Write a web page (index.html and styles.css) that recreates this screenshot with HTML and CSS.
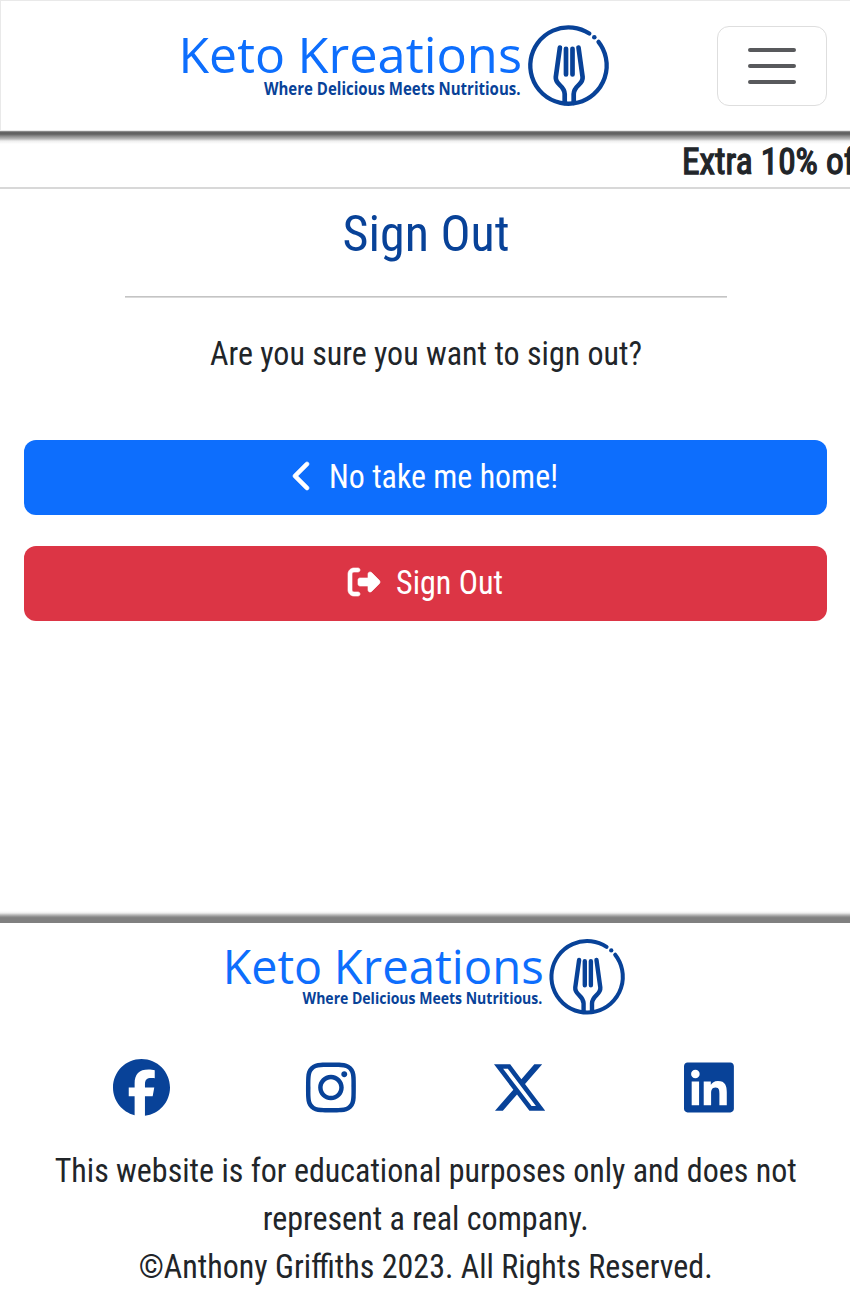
FILE: index.html
```html
<!DOCTYPE html>
<html lang="en">
<head>
<meta charset="utf-8">
<title>Keto Kreations - Sign Out</title>
<link rel="stylesheet" href="styles.css">
</head>
<body>
<svg class="defs" width="0" height="0">
  <symbol id="logo" viewBox="0 0 430 84">
    <g class="brand-name">
      <text x="-1.5" y="49" textLength="106.5" lengthAdjust="spacingAndGlyphs">Keto</text>
      <text x="117.5" y="49" textLength="224.5" lengthAdjust="spacingAndGlyphs">Kreations</text>
    </g>
    <text class="brand-tag" x="84" y="71" textLength="256.5" lengthAdjust="spacingAndGlyphs">Where Delicious Meets Nutritious.</text>
    <g class="brand-mark">
      <path d="M409.3 9.5A38.2 38.2 0 1 0 418.5 17.9"/>
      <path class="fork" d="M379.9 23.5L375.8 53C375 61 384.5 61 384.7 70V79M398.5 23.5L402.6 53C403.4 61 393.9 61 393.7 70V79"/>
      <path class="fork" d="M386 24.8V50.5M392.5 24.8V50.5"/>
      <circle cx="414.3" cy="13.3" r="2.3"/>
    </g>
  </symbol>
</svg>
<header class="navbar">
  <svg class="logo"><use href="#logo"/></svg>
  <button class="toggler" aria-label="Menu">
    <svg width="60" height="60" viewBox="0 0 30 30"><path d="M4 7h22M4 15h22M4 23h22"/></svg>
  </button>
</header>
<div class="banner">
  <svg class="banner-line" width="168" height="50"><text x="0" y="36.5" textLength="173" lengthAdjust="spacingAndGlyphs">Extra 10% of</text></svg>
</div>
<main class="content">
  <svg class="title" width="168" height="60"><text x="0.5" y="42" textLength="167" lengthAdjust="spacingAndGlyphs">Sign Out</text></svg>
  <hr class="rule">
  <svg class="line" width="432" height="48"><text x="0" y="34.7" textLength="432" lengthAdjust="spacingAndGlyphs">Are you sure you want to sign out?</text></svg>
  <div class="actions">
    <a class="btn btn-home">
      <svg class="chevron" viewBox="0 0 320 512"><path d="M9.4 233.4c-12.5 12.5-12.5 32.8 0 45.3l192 192c12.5 12.5 32.8 12.5 45.3 0s12.5-32.8 0-45.3L77.3 256 246.6 86.6c12.5-12.5 12.5-32.8 0-45.3s-32.8-12.5-45.3 0l-192 192z"/></svg>
      <svg class="line" width="230" height="48"><text x="0" y="34.7" textLength="229" lengthAdjust="spacingAndGlyphs">No take me home!</text></svg>
    </a>
    <a class="btn btn-out">
      <svg class="exit" viewBox="0 0 512 512"><path d="M377.9 105.9L500.7 228.7c7.2 7.2 11.3 17.1 11.3 27.3s-4.1 20.1-11.3 27.3L377.9 406.1c-6.4 6.4-15 9.9-24 9.9c-18.7 0-33.9-15.2-33.9-33.9l0-62.1-128 0c-17.7 0-32-14.3-32-32l0-64c0-17.7 14.3-32 32-32l128 0 0-62.1c0-18.7 15.2-33.9 33.9-33.9c9 0 17.6 3.6 24 9.9zM160 96L96 96c-17.7 0-32 14.3-32 32l0 256c0 17.7 14.3 32 32 32l64 0c17.7 0 32 14.3 32 32s-14.3 32-32 32l-64 0c-53 0-96-43-96-96L0 128C0 75 43 32 96 32l64 0c17.7 0 32 14.3 32 32s-14.3 32-32 32z"/></svg>
      <svg class="line" width="107" height="48"><text x="0" y="34.7" textLength="107" lengthAdjust="spacingAndGlyphs">Sign Out</text></svg>
    </a>
  </div>
</main>
<footer class="footer">
  <svg class="logo-small"><use href="#logo"/></svg>
  <div class="social">
    <svg viewBox="0 0 512 512"><path d="M512 256C512 114.6 397.4 0 256 0S0 114.6 0 256C0 376 82.7 476.8 194.2 504.5V334.2H141.4V256h52.8V222.3c0-87.1 39.4-127.5 125-127.5c16.2 0 44.2 3.2 55.7 6.4V172c-6-.6-16.5-1-29.6-1c-42 0-58.2 15.9-58.2 57.2V256h83.6l-14.4 78.2H287V510.1C413.8 494.8 512 386.9 512 256z"/></svg>
    <svg viewBox="0 0 448 512"><path d="M224.1 141c-63.6 0-114.9 51.3-114.9 114.9s51.3 114.9 114.9 114.9S339 319.5 339 255.9 287.7 141 224.1 141zm0 189.6c-41.1 0-74.7-33.5-74.7-74.7s33.5-74.7 74.7-74.7 74.7 33.5 74.7 74.7-33.6 74.7-74.7 74.7zm146.4-194.3c0 14.9-12 26.8-26.8 26.8-14.9 0-26.8-12-26.8-26.8s12-26.8 26.8-26.8 26.8 12 26.8 26.8zm76.1 27.2c-1.7-35.9-9.9-67.7-36.2-93.9-26.2-26.2-58-34.4-93.9-36.2-37-2.1-147.9-2.1-184.9 0-35.8 1.7-67.6 9.9-93.9 36.1s-34.4 58-36.2 93.9c-2.1 37-2.1 147.9 0 184.9 1.7 35.9 9.9 67.7 36.2 93.9s58 34.4 93.9 36.2c37 2.1 147.9 2.1 184.9 0 35.9-1.7 67.7-9.9 93.9-36.2 26.2-26.2 34.4-58 36.2-93.9 2.1-37 2.1-147.8 0-184.8zM398.8 388c-7.8 19.6-22.9 34.7-42.6 42.6-29.5 11.7-99.5 9-132.1 9s-102.7 2.6-132.1-9c-19.6-7.8-34.7-22.9-42.6-42.6-11.7-29.5-9-99.5-9-132.1s-2.6-102.7 9-132.1c7.8-19.6 22.9-34.7 42.6-42.6 29.5-11.7 99.5-9 132.1-9s102.7-2.6 132.1 9c19.6 7.8 34.7 22.9 42.6 42.6 11.7 29.5 9 99.5 9 132.1s2.7 102.7-9 132.1z"/></svg>
    <svg viewBox="0 0 512 512"><path d="M389.2 48h70.6L305.6 224.2 487 464H345L233.7 318.6 106.5 464H35.8L200.7 275.5 26.8 48H172.4L272.9 180.9 389.2 48zM364.4 421.8h39.1L151.1 88h-42L364.4 421.8z"/></svg>
    <svg viewBox="0 0 448 512"><path d="M416 32H31.9C14.3 32 0 46.5 0 64.3v383.4C0 465.5 14.3 480 31.9 480H416c17.6 0 32-14.5 32-32.3V64.3c0-17.8-14.4-32.3-32-32.3zM135.4 416H69V202.2h66.5V416zm-33.2-243c-21.3 0-38.5-17.3-38.5-38.5S80.9 96 102.2 96c21.2 0 38.5 17.3 38.5 38.5 0 21.3-17.2 38.5-38.5 38.5zm282.1 243h-66.4V312c0-24.8-.5-56.7-34.5-56.7-34.6 0-39.9 27-39.9 54.9V416h-66.4V202.2h63.7v29.2h.9c8.9-16.8 30.6-34.5 62.9-34.5 67.2 0 79.7 44.3 79.7 101.9V416z"/></svg>
  </div>
  <div class="legal">
    <svg class="line" width="742" height="48"><text x="0.7" y="34.7" textLength="742" lengthAdjust="spacingAndGlyphs">This website is for educational purposes only and does not</text></svg>
    <svg class="line" width="326" height="48"><text x="0.7" y="34.7" textLength="326" lengthAdjust="spacingAndGlyphs">represent a real company.</text></svg>
    <svg class="line" width="574" height="48"><text x="0.7" y="34.7" textLength="574" lengthAdjust="spacingAndGlyphs">©Anthony Griffiths 2023. All Rights Reserved.</text></svg>
  </div>
</footer>
</body>
</html>
```
FILE: styles.css
```css
* { box-sizing: border-box; }
body {
  margin: 0;
  width: 850px;
  height: 1298px;
  overflow: hidden;
  display: flex;
  flex-direction: column;
  background: #fff;
  color: #212529;
  font-family: "Roboto Condensed", Roboto, "Liberation Sans", sans-serif;
  font-stretch: condensed;
}
svg { display: block; flex: none; overflow: visible; }
symbol { overflow: visible; }
text { fill: currentColor; }
.defs { height: 0; }
.navbar {
  height: 131px;
  flex: none;
  display: flex;
  align-items: flex-start;
  justify-content: space-between;
  padding: 23px 22px 0 179px;
  border: 1px solid #e9e9e9;
  border-right: 0;
}
.logo { width: 430px; height: 84px; }
.logo-small { width: 402px; height: 78.5px; }
.brand-name { font: 400 50px "Open Sans", sans-serif; color: #0d6efd; }
.brand-tag { font: 700 17px "Open Sans", sans-serif; color: #084298; }
.brand-mark path { fill: none; stroke: #084298; stroke-width: 4.3; stroke-linecap: round; }
.brand-mark .fork { stroke-width: 4.7; }
.brand-mark circle { fill: #084298; }
.toggler {
  width: 110px;
  height: 80px;
  margin: 2px 1px 0 0;
  padding: 0;
  display: grid;
  place-items: center;
  background: #fff;
  border: 1.5px solid #dedede;
  border-radius: 12px;
}
.toggler path { fill: none; stroke: #58595c; stroke-width: 2; stroke-linecap: round; }
.banner {
  height: 58px;
  flex: none;
  display: flex;
  justify-content: flex-end;
  padding-top: 6px;
  border-bottom: 2px solid #d8d8d8;
  background: linear-gradient(#aaa 0, #666 1px, #606060 3px, #888 5px, #bbb 8px, #eee 10px, #fff 13px);
}
.banner-line { font-size: 37px; }
.banner-line text { stroke: currentColor; stroke-width: 1.3px; }
.content {
  height: 722px;
  flex: none;
  display: flex;
  flex-direction: column;
  align-items: center;
  padding: 20px 23px 0 24px;
}
.title { font-size: 50px; color: #084298; }
.rule { width: 602px; height: 2px; margin: 27px 0 32px; border: 0; background: linear-gradient(#c4c4c4 50%, #dadada 50%); }
.line { font-size: 33px; }
.actions { width: 100%; margin-top: 62px; display: grid; gap: 30.5px; }
.btn {
  height: 75px;
  display: flex;
  align-items: center;
  justify-content: center;
  border-radius: 12px;
  color: #fff;
}
.btn path { fill: #fff; stroke: #fff; stroke-width: 10; }
.btn .line { margin-bottom: 1px; }
.btn-home { background: #0d6efd; }
.btn-out { background: #dc3545; }
.chevron { width: 20px; height: 32px; margin: 0 16px 3px 0; }
.exit { width: 32px; height: 32px; margin: 0 16px 2px 0; }
.footer {
  flex: 1;
  display: flex;
  flex-direction: column;
  align-items: center;
  padding-top: 27px;
  background: linear-gradient(#fff 0, #eee 2px, #b5b5b5 4px, #888 6px, #808080 7px, #808080 12px, #fff 12px);
}
.social {
  width: 756px;
  margin-top: 42px;
  display: grid;
  grid-template-columns: repeat(4, 1fr);
  justify-items: center;
}
.social svg { height: 57px; }
.social path { fill: #084298; }
.legal { margin-top: 31px; display: flex; flex-direction: column; align-items: center; }
```
